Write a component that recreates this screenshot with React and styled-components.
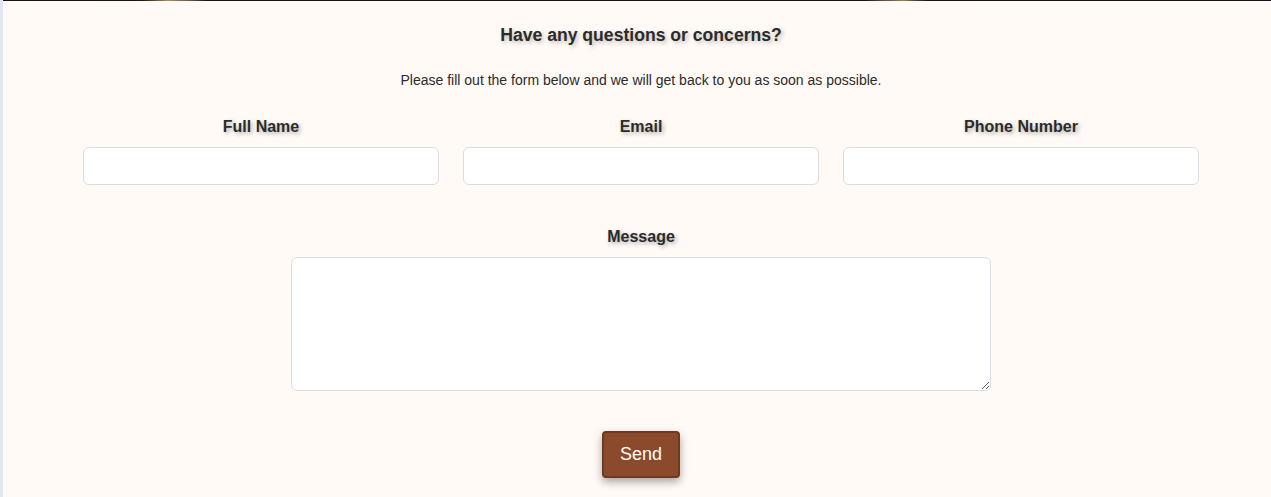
import styled, { createGlobalStyle } from "styled-components";

const GlobalStyle = createGlobalStyle`
  html, body {
    margin: 0;
    padding: 0;
  }
  body {
    font-family: "Liberation Sans", Arial, sans-serif;
    background: #fffaf5;
  }
`;

const fields = [
  { id: "name", label: "Full Name", type: "text" },
  { id: "email", label: "Email", type: "email" },
  { id: "phone", label: "Phone Number", type: "tel" },
];

export default function App() {
  return (
    <>
      <GlobalStyle />
      <Page>
        <TopEdge />
        <Section>
          <Title>Have any questions or concerns?</Title>
          <Intro>
            Please fill out the form below and we will get back to you as soon as possible.
          </Intro>
          <Form onSubmit={(e) => e.preventDefault()}>
            <FieldRow>
              {fields.map((f) => (
                <Field key={f.id}>
                  <Label htmlFor={f.id}>{f.label}</Label>
                  <Input id={f.id} type={f.type} />
                </Field>
              ))}
            </FieldRow>
            <MessageField>
              <Label htmlFor="message">Message</Label>
              <TextArea id="message" />
            </MessageField>
            <SendButton type="submit">Send</SendButton>
          </Form>
        </Section>
      </Page>
    </>
  );
}

const Page = styled.div`
  min-height: 497px;
  box-sizing: border-box;
  border-left: 3px solid #e3e5f1;
  background: #fffaf5;
`;

const TopEdge = styled.div`
  height: 1px;
  background: linear-gradient(
    90deg,
    #141414 0%,
    #1c1714 11%,
    #6b4a30 12%,
    #b08a60 13%,
    #6b4a30 15%,
    #1a1614 16%,
    #1a1614 68%,
    #5a3c26 69%,
    #a07850 71%,
    #5a3c26 72%,
    #161414 73%,
    #141418 100%
  );
`;

const Section = styled.section`
  padding: 23px 0 20px 8px;
  display: flex;
  flex-direction: column;
  align-items: center;
  color: #2b2b2b;
`;

const Title = styled.h2`
  margin: 0;
  font-size: 17.6px;
  line-height: 22px;
  font-weight: 700;
  text-shadow: 2px 2px 4px rgba(0, 0, 0, 0.25);
`;

const Intro = styled.p`
  margin: 26px 0 0;
  font-size: 14px;
  line-height: 16px;
  color: #2b2b2b;
`;

const Form = styled.form`
  margin-top: 30px;
  display: flex;
  flex-direction: column;
  align-items: center;
`;

const FieldRow = styled.div`
  display: grid;
  grid-template-columns: repeat(3, 356px);
  gap: 24px;
`;

const Field = styled.div`
  display: flex;
  flex-direction: column;
  align-items: center;
  gap: 11px;
`;

const MessageField = styled(Field)`
  margin-top: 43px;
`;

const Label = styled.label`
  font-size: 16px;
  line-height: 18px;
  font-weight: 700;
  color: #2b2b2b;
  text-shadow: 2px 2px 4px rgba(0, 0, 0, 0.3);
`;

const Input = styled.input`
  box-sizing: border-box;
  width: 356px;
  height: 38px;
  border: 1px solid #dcdde2;
  border-radius: 6px;
  background: #ffffff;
  padding: 8px 10px;
  font: 15px "Liberation Sans", Arial, sans-serif;
  outline: none;
`;

const TextArea = styled.textarea`
  box-sizing: border-box;
  width: 700px;
  height: 134px;
  border: 1px solid #dcdde2;
  border-radius: 6px;
  background: #ffffff;
  padding: 8px 10px;
  font: 15px "Liberation Sans", Arial, sans-serif;
  outline: none;
`;

const SendButton = styled.button`
  margin-top: 40px;
  box-sizing: border-box;
  width: 78px;
  height: 47px;
  background: #8b4a2b;
  color: #ffffff;
  border: 2px solid #6e391e;
  border-radius: 4px;
  font: 18px "Liberation Sans", Arial, sans-serif;
  box-shadow: 0 4px 8px rgba(0, 0, 0, 0.35);
  cursor: pointer;
`;
